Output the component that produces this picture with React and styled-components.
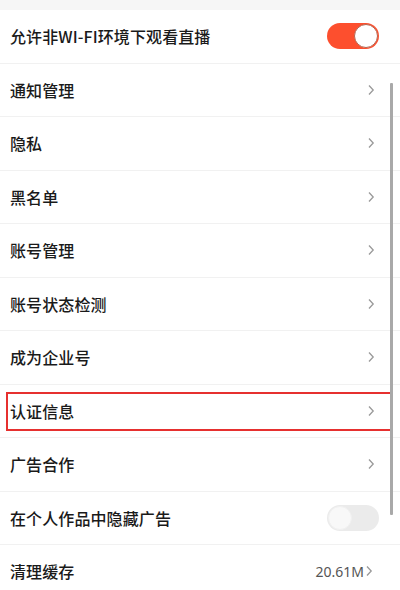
import React from "react";
import styled, { createGlobalStyle } from "styled-components";

const Global = createGlobalStyle`
  html, body { margin: 0; padding: 0; background: #fff; }
  body { font-family: "Noto Sans CJK SC", "Noto Sans", sans-serif; }
`;

const Page = styled.div`
  position: relative;
  width: 400px;
  height: 590px;
  overflow: hidden;
  background: #fff;
`;

const TopBand = styled.div`
  height: 10px;
  background: #f6f6f6;
`;

const List = styled.div`
  display: flex;
  flex-direction: column;
`;

const Row = styled.div`
  position: relative;
  height: 52.5px;
  display: flex;
  align-items: center;
  justify-content: space-between;
  padding: 0 21px 0 10px;
  border-bottom: 1px solid #f1f1f1;
  background: #fff;
`;

const Label = styled.span`
  font-size: 16px;
  font-weight: 500;
  color: #1a1a1a;
  letter-spacing: 0.1px;
`;

const Right = styled.div`
  display: flex;
  align-items: center;
  gap: 1px;
`;

const Value = styled.span`
  font-family: "Noto Sans", sans-serif;
  font-size: 14px;
  color: #555;
`;

const ChevronBox = styled.span`
  display: flex;
  margin-right: ${(p) => (p.tight ? "6px" : "4px")};
`;

const Switch = styled.div`
  position: relative;
  width: 52px;
  height: 26px;
  border-radius: 13px;
  background: ${(p) => (p.on ? "#fd4f2e" : "#ebebeb")};
`;

const Knob = styled.div`
  position: absolute;
  top: 1px;
  ${(p) => (p.on ? "right: 1px;" : "left: 1px;")}
  width: 24px;
  height: 24px;
  border-radius: 50%;
  box-sizing: border-box;
  background: ${(p) => (p.on ? "#fff" : "#f8f8f8")};
  border: 1px solid ${(p) => (p.on ? "#b5644f" : "#f0f0f0")};
`;

const Highlight = styled.div`
  position: absolute;
  left: 6px;
  right: 8px;
  top: 7px;
  bottom: 6px;
  border: 2px solid #e6302f;
  pointer-events: none;
`;

const Scrollbar = styled.div`
  position: absolute;
  left: 390px;
  top: 83px;
  width: 3px;
  height: 432px;
  background: #a9a9a9;
  border-radius: 1px;
`;

const Chevron = ({ tight }) => (
  <ChevronBox tight={tight}>
    <svg width="8" height="12" viewBox="0 0 8 12">
      <path d="M2 1.5 L6.2 6 L2 10.5" fill="none" stroke="#999" strokeWidth="1.3" />
    </svg>
  </ChevronBox>
);

const items = [
  { label: "允许非WI-FI环境下观看直播", switch: true, on: true },
  { label: "通知管理" },
  { label: "隐私" },
  { label: "黑名单" },
  { label: "账号管理" },
  { label: "账号状态检测" },
  { label: "成为企业号" },
  { label: "认证信息", highlight: true },
  { label: "广告合作" },
  { label: "在个人作品中隐藏广告", switch: true, on: false },
  { label: "清理缓存", value: "20.61M" },
];

export default function App() {
  return (
    <Page>
      <Global />
      <TopBand />
      <List>
        {items.map((it) => (
          <Row key={it.label}>
            <Label>{it.label}</Label>
            <Right>
              {it.switch ? (
                <Switch on={it.on}>
                  <Knob on={it.on} />
                </Switch>
              ) : (
                <>
                  {it.value && <Value>{it.value}</Value>}
                  <Chevron tight={!!it.value} />
                </>
              )}
            </Right>
            {it.highlight && <Highlight />}
          </Row>
        ))}
      </List>
      <Scrollbar />
    </Page>
  );
}
